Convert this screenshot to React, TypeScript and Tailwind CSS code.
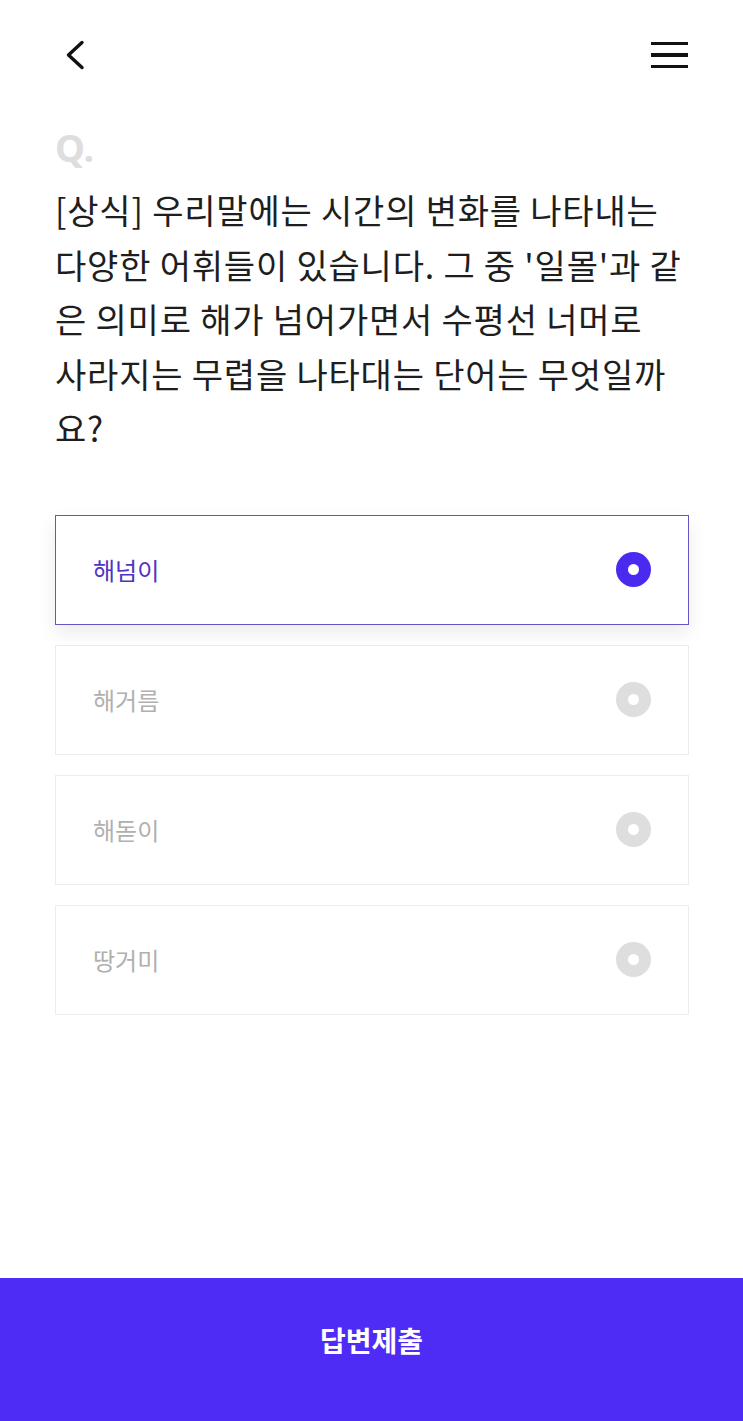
import { useState } from "react";

const options = ["해넘이", "해거름", "해돋이", "땅거미"];

const questionLines = [
  "[상식] 우리말에는 시간의 변화를 나타내는",
  "다양한 어휘들이 있습니다. 그 중 '일몰'과 같",
  "은 의미로 해가 넘어가면서 수평선 너머로",
  "사라지는 무렵을 나타대는 단어는 무엇일까",
  "요?",
];

export default function App() {
  const [selected, setSelected] = useState(0);

  return (
    <div
      className="w-full min-h-[1421px] flex flex-col bg-white"
      style={{ fontFamily: '"Noto Sans CJK KR", "Noto Sans", sans-serif' }}
    >
      {/* Header */}
      <header className="h-[110px] flex items-center justify-between pl-[64px] pr-[55px]">
        <button aria-label="back" className="w-[22px] h-[30px] flex items-center">
          <svg width="22" height="30" viewBox="0 0 22 30" fill="none">
            <path d="M18 2.5 L4.5 15 L18 27.5" stroke="#111" strokeWidth="3.4" strokeLinecap="round" strokeLinejoin="round" />
          </svg>
        </button>
        <button aria-label="menu" className="w-[37px] flex flex-col gap-[8px]">
          <span className="block h-[3.5px] w-full bg-[#111]" />
          <span className="block h-[3.5px] w-full bg-[#111]" />
          <span className="block h-[3.5px] w-full bg-[#111]" />
        </button>
      </header>

      <main className="pl-[55px] pr-[54px]">
        <div
          className="text-[38px] leading-[40px] font-bold text-[#dedede] mt-[17px]"
          style={{ fontFamily: '"Noto Sans", sans-serif' }}
        >
          Q.
        </div>

        <p className="mt-[16px] text-[34px] leading-[54.5px] text-[#1e1e1e] tracking-[0.8px]">
          {questionLines.map((l, i) => (
            <span key={i} className="block whitespace-nowrap">
              {l}
            </span>
          ))}
        </p>

        <div className="mt-[59px] flex flex-col gap-5">
          {options.map((opt, i) => {
            const on = i === selected;
            return (
              <button
                key={opt}
                onClick={() => setSelected(i)}
                className={
                  on
                    ? "h-[110px] w-full flex items-center justify-between pl-[37px] pr-[37px] border-[1.5px] border-[#6a52c0] bg-white shadow-[0_8px_18px_rgba(0,0,0,0.08)]"
                    : "h-[110px] w-full flex items-center justify-between pl-[37px] pr-[37px] border border-[#ececec] bg-white"
                }
              >
                <span className={on ? "text-[24px] text-[#4e34c4]" : "text-[24px] text-[#b0b0b0]"}>{opt}</span>
                <span
                  className={
                    on
                      ? "w-[35px] h-[35px] rounded-full bg-[#4b2af0] flex items-center justify-center"
                      : "w-[35px] h-[35px] rounded-full bg-[#dedede] flex items-center justify-center"
                  }
                >
                  <span className="w-[11px] h-[11px] rounded-full bg-white" />
                </span>
              </button>
            );
          })}
        </div>
      </main>

      <div className="flex-1" />

      <button className="h-[143px] w-full bg-[#4e2cf5] text-white text-[28px] font-bold pb-[20px] flex items-center justify-center">
        답변제출
      </button>
    </div>
  );
}
